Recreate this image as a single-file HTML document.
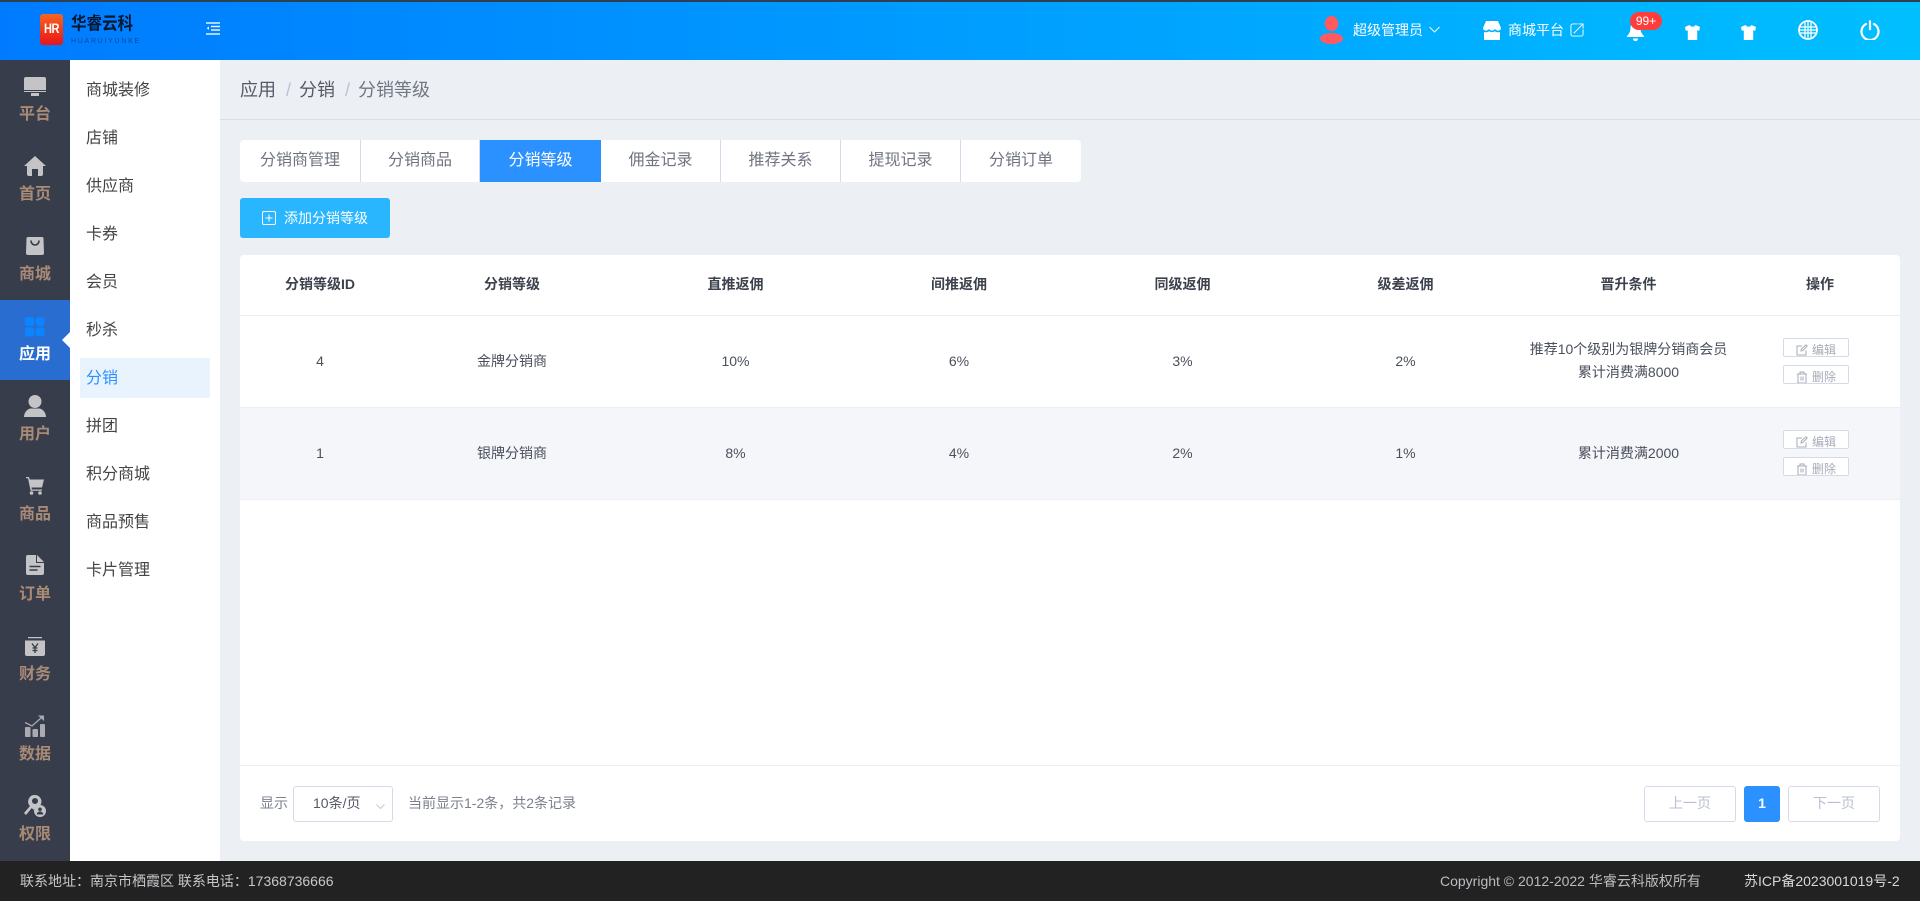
<!DOCTYPE html>
<html lang="zh-CN"><head><meta charset="utf-8"><title>分销等级</title>
<style>
*{box-sizing:border-box;margin:0;padding:0}
html,body{width:1920px;height:901px;overflow:hidden;background:#eceff4;font-family:"Liberation Sans","Noto Sans CJK SC",sans-serif;font-size:14px;color:#4a4f5c}
.a{position:absolute}
.t{position:absolute;white-space:nowrap;line-height:20px}
svg{position:absolute;display:block}
#top{left:0;top:0;width:1920px;height:60px;background:linear-gradient(90deg,#007bff,#00bfff)}
#stripe{left:0;top:0;width:1920px;height:2px;background:#2e3f4f}
#rail{left:0;top:60px;width:70px;height:801px;background:#373d4b}
.rl{position:absolute;left:0;width:70px;text-align:center;font-size:16px;font-weight:bold;line-height:22px;color:#a98a76}
#sub{left:70px;top:60px;width:150px;height:801px;background:#fff}
.si{position:absolute;left:86px;font-size:16px;line-height:42px;height:40px;color:#444;white-space:nowrap}
.tab{position:absolute;top:140px;height:42px;background:#fff;color:#6f7480;font-size:16px;line-height:42px;text-align:center;border-right:1px solid #d5dae8}
.th{position:absolute;top:274px;font-weight:bold;text-align:center;line-height:20px;color:#3c414d;font-size:14px}
.td{position:absolute;text-align:center;line-height:20px;color:#4a4f5c;font-size:14px}
.op{position:absolute;left:1783px;width:66px;height:19px;background:#fff;border:1px solid #d5dae8;border-radius:2px;overflow:hidden;font-size:12px;color:#a6abb8;line-height:22px;padding-left:28px}
.op svg{left:12px;top:5px}
.btn{position:absolute;top:786px;height:36px;border:1px solid #d5dae8;border-radius:3px;background:#fff;text-align:center;line-height:33px;color:#b8bfd0;font-size:14px}
</style></head><body>
<div class="a" id="top"></div><div class="a" id="stripe"></div>

<!-- logo -->
<div class="a" style="left:40px;top:14px;width:23px;height:31px;border-radius:3px;background:linear-gradient(180deg,#f7651d,#e8141c)"></div>
<div class="t" style="left:40px;top:19px;width:23px;text-align:center;color:#fff;font-weight:bold;font-size:11px;line-height:20px;letter-spacing:-.5px;transform:scaleY(1.25)">HR</div>
<div class="t" style="left:71px;top:15px;font-size:15.5px;font-weight:bold;color:#05162e;transform:scaleY(1.15);transform-origin:0 50%">华睿云科</div>
<div class="t" style="left:71px;top:38px;font-size:7px;line-height:8px;letter-spacing:1.72px;color:#0a4a99">HUARUIYUNKE</div>
<svg style="left:206px;top:22px" width="14" height="13" viewBox="0 0 14 13" fill="none" stroke="#e4f1ff" stroke-width="1.4"><path d="M0 1h14M5 4.5h9M5 8h9M0 12h14"/><path d="M3 4.5v3.4L.6 6.2z" fill="#e4f1ff" stroke="none"/></svg>

<!-- header right -->
<svg style="left:1320px;top:16px" width="23" height="28" viewBox="0 0 23 28" fill="#ff5a5f"><ellipse cx="11.5" cy="7.5" rx="6.8" ry="7.5"/><ellipse cx="11.5" cy="22.500" rx="11.500" ry="5.500"/></svg>
<div class="t" style="left:1353px;top:20px;color:#fff;font-size:14px">超级管理员</div>
<svg style="left:1429px;top:26px" width="11" height="8" viewBox="0 0 11 8" fill="none" stroke="#e8f6ff" stroke-width="1.1"><path d="M.5 1l5 5 5-5"/></svg>
<svg style="left:1483px;top:21px" width="18" height="19" viewBox="0 0 18 19" fill="#fff"><path d="M3 0h12l3 7c0 2-1.600 2.600-3 2.600-1 0-2-.5-3-1.600-.8 1-1.800 1.600-3 1.600S6.800 9 6 8c-1 1.100-2 1.600-3 1.600C1.600 9.600 0 9 0 7z"/><path d="M1 11c2 .6 3.600.2 5-.8 2 1.200 4 1.200 6 0 1.400 1 3 1.400 5 .8v8H1z"/></svg>
<div class="t" style="left:1508px;top:20px;color:#fff;font-size:14px">商城平台</div>
<svg style="left:1570px;top:23px" width="14" height="14" viewBox="0 0 15 15" fill="none" stroke="#fff" stroke-width="1"><path d="M8 1H3a2 2 0 0 0-2 2v9a2 2 0 0 0 2 2h9a2 2 0 0 0 2-2V7M9 1h5v5M14 1L4 11"/></svg>
<svg style="left:1627px;top:22px" width="17" height="19" viewBox="0 0 17 19" fill="#fff"><path d="M8.500 0C5 0 3.500 3 3.500 6c0 4-1.500 6-3.500 8v1h17v-1c-2-2-3.500-4-3.500-8 0-3-1.500-6-5-6z"/><path d="M6 16.500h5c0 1.500-1 2.500-2.500 2.500S6 18 6 16.500z"/></svg>
<div class="a" style="left:1630px;top:12px;width:32px;height:18px;border-radius:9px;background:#ff3d3d;color:#fff;font-size:12px;line-height:18px;text-align:center">99+</div>
<svg style="left:1685px;top:25px" width="15" height="15" viewBox="0 0 15 15" fill="#fff"><path d="M4.500 0c.8 1.200 1.800 1.700 3 1.700S9.700 1.200 10.500 0L15 2l-.8 3.800-2-.4V15H2.800V5.400l-2 .4L0 2z"/></svg>
<svg style="left:1741px;top:25px" width="15" height="15" viewBox="0 0 15 15" fill="#fff"><path d="M4.500 0c.8 1.200 1.800 1.700 3 1.700S9.700 1.200 10.500 0L15 2l-.8 3.800-2-.4V15H2.800V5.400l-2 .4L0 2z"/></svg>
<svg style="left:1798px;top:20px" width="20" height="20" viewBox="0 0 20 20" fill="none" stroke="#fff"><circle cx="10" cy="10" r="9" stroke-width="1.800"/><path d="M1 7h18M1 10h18M1 13h18M7 2v16M10 1v18M13 2v16" stroke-width="1.200"/></svg>
<svg style="left:1860px;top:20px" width="20" height="20" viewBox="0 0 20 20" fill="none" stroke="#fff" stroke-width="2.200" stroke-linecap="round"><path d="M6 4a8.500 8.500 0 1 0 8 0M10 1.200v8"/></svg>

<!-- rail -->
<div class="a" id="rail"></div>
<div class="a" style="left:0;top:300px;width:70px;height:80px;background:#2a6dd0"></div>
<div class="a" style="left:62px;top:332px;width:0;height:0;border:8px solid transparent;border-left-width:0;border-right-color:#fff"></div>

<svg style="left:24px;top:77px" width="22" height="19" viewBox="0 0 22 19" fill="#c4c4c6"><path d="M2 0h18a2 2 0 0 1 2 2v11H0V2a2 2 0 0 1 2-2z"/><path d="M0 14h22v1H0z"/><path d="M7 16h8v3H7z"/></svg>
<svg style="left:24px;top:156px" width="22" height="20" viewBox="0 0 22 20" fill="#c4c4c6"><path d="M11 0l11 10h-3v8a2 2 0 0 1-2 2h-3v-7H8v7H5a2 2 0 0 1-2-2v-8H0z"/></svg>
<svg style="left:26px;top:237px" width="18" height="18" viewBox="0 0 18 18"><path d="M2 0h14a1.500 1.500 0 0 1 1.500 1.500L18 16a2 2 0 0 1-2 2H2a2 2 0 0 1-2-2l.5-14.500A1.500 1.500 0 0 1 2 0z" fill="#c4c4c6"/><path d="M5 3.500c0 6 8 6 8 0" fill="none" stroke="#373d4b" stroke-width="1.600"/></svg>
<svg style="left:25px;top:317px" width="20" height="20" viewBox="0 0 20 20" fill="#0a84ff"><rect width="9" height="9" rx="2.500"/><circle cx="15" cy="4.500" r="4.800"/><rect y="10.500" width="9" height="9" rx="2.500"/><rect x="10.500" y="10.500" width="9" height="9" rx="2.500"/></svg>
<svg style="left:24px;top:395px" width="22" height="22" viewBox="0 0 22 22" fill="#c4c4c6"><circle cx="11" cy="6.500" r="6.500"/><path d="M0 22c0-5 4-8.500 7-8.500h8c3 0 7 3.500 7 8.500z"/></svg>
<svg style="left:26px;top:477px" width="18" height="18" viewBox="0 0 18 18" fill="#c4c4c6"><path d="M0 0h3l.7 2.500H18l-2 8H5.500l.4 2H16v1.300H4.600L2 1.300H0z"/><circle cx="5.500" cy="16" r="1.800"/><circle cx="14" cy="16" r="1.800"/></svg>
<svg style="left:26px;top:555px" width="18" height="20" viewBox="0 0 18 20"><path d="M2 0h9l7 7v11a2 2 0 0 1-2 2H2a2 2 0 0 1-2-2V2a2 2 0 0 1 2-2z" fill="#c4c4c6"/><path d="M10.500 0v7.500H18" fill="none" stroke="#373d4b"/><path d="M3.500 11.500h11M3.500 15h8" stroke="#373d4b" stroke-width="1.400"/></svg>
<svg style="left:25px;top:637px" width="20" height="19" viewBox="0 0 20 19" fill="#c4c4c6"><path d="M3 0h14v1.200H3zM0 3.500h20V17a2 2 0 0 1-2 2H2a2 2 0 0 1-2-2z"/><path d="M7 6.500l3 4 3-4M10 10.500V16M7.500 11h5M7.500 13.500h5" fill="none" stroke="#373d4b" stroke-width="1.300"/></svg>
<svg style="left:25px;top:715px" width="20" height="22" viewBox="0 0 20 22" fill="#a9abb0"><rect y="12" width="5.500" height="10" rx="1"/><rect x="7.500" y="14" width="5.500" height="8" rx="1"/><rect x="15" y="9" width="5" height="13" rx="1"/><path d="M0 7.500l7 3.500 9-8" fill="none" stroke="#a9abb0" stroke-width="1.300"/><path d="M13 .5h6v5.500z"/></svg>
<svg style="left:24px;top:795px" width="22" height="22" viewBox="0 0 22 22" fill="#c4c4c6"><path d="M11 0a6.500 6.500 0 0 1 4 11.600 7 7 0 0 0-5.500 3.300L7.800 13 2 20l-2-2L6 11A6.500 6.500 0 0 1 11 0zm0 3a3 3 0 1 0 0 6 3 3 0 0 0 0-6z"/><circle cx="16" cy="16" r="6"/><circle cx="16" cy="14.300" r="1.800" fill="#373d4b"/><path d="M12.800 19.500c0-2 1.500-3 3.200-3s3.200 1 3.200 3z" fill="#373d4b"/></svg>

<div class="rl" style="top:104px">平台</div>
<div class="rl" style="top:184px">首页</div>
<div class="rl" style="top:264px">商城</div>
<div class="rl" style="top:344px;color:#fff">应用</div>
<div class="rl" style="top:424px">用户</div>
<div class="rl" style="top:504px">商品</div>
<div class="rl" style="top:584px">订单</div>
<div class="rl" style="top:664px">财务</div>
<div class="rl" style="top:744px">数据</div>
<div class="rl" style="top:824px">权限</div>

<!-- sub menu -->
<div class="a" id="sub"></div>
<div class="a" style="left:80px;top:358px;width:130px;height:40px;background:#e8f3fe;border-radius:2px"></div>
<div class="si" style="top:70px">商城装修</div>
<div class="si" style="top:118px">店铺</div>
<div class="si" style="top:166px">供应商</div>
<div class="si" style="top:214px">卡券</div>
<div class="si" style="top:262px">会员</div>
<div class="si" style="top:310px">秒杀</div>
<div class="si" style="top:358px;color:#2b91ff">分销</div>
<div class="si" style="top:406px">拼团</div>
<div class="si" style="top:454px">积分商城</div>
<div class="si" style="top:502px">商品预售</div>
<div class="si" style="top:550px">卡片管理</div>

<!-- breadcrumb -->
<div class="a" style="left:220px;top:60px;width:1700px;height:60px;border-bottom:1px solid #d9dde8"></div>
<div class="t" style="left:240px;top:79px;font-size:18px;line-height:22px;color:#555a66">应用</div>
<div class="t" style="left:286px;top:79px;font-size:18px;line-height:22px;color:#b9c2d3">/</div>
<div class="t" style="left:299px;top:79px;font-size:18px;line-height:22px;color:#555a66">分销</div>
<div class="t" style="left:345px;top:79px;font-size:18px;line-height:22px;color:#b9c2d3">/</div>
<div class="t" style="left:358px;top:79px;font-size:18px;line-height:22px;color:#727784">分销等级</div>

<!-- tabs -->
<div class="tab" style="left:240px;width:121px;border-radius:4px 0 0 4px">分销商管理</div>
<div class="tab" style="left:361px;width:119px">分销商品</div>
<div class="tab" style="left:480px;width:121px;background:#2b91ff;color:#fff;border-right:0">分销等级</div>
<div class="tab" style="left:601px;width:120px">佣金记录</div>
<div class="tab" style="left:721px;width:120px">推荐关系</div>
<div class="tab" style="left:841px;width:120px">提现记录</div>
<div class="tab" style="left:961px;width:120px;border-right:0;border-radius:0 4px 4px 0">分销订单</div>

<!-- add button -->
<div class="a" style="left:240px;top:198px;width:150px;height:40px;background:#29b6ff;border-radius:3px"></div>
<svg style="left:262px;top:211px" width="14" height="14" viewBox="0 0 14 14" fill="none" stroke="#fff" stroke-width="1"><rect x=".5" y=".5" width="13" height="13" rx="1.500"/><path d="M3.500 7h7M7 3.500v7"/></svg>
<div class="t" style="left:284px;top:208px;color:#fff;font-size:14px">添加分销等级</div>

<!-- card -->
<div class="a" style="left:240px;top:255px;width:1660px;height:586px;background:#fff;border-radius:4px"></div>
<div class="a" style="left:240px;top:315px;width:1660px;height:1px;background:#edeff3"></div>
<div class="a" style="left:240px;top:407px;width:1660px;height:1px;background:#edeff3"></div>
<div class="a" style="left:240px;top:408px;width:1660px;height:91px;background:#f5f6fa"></div>
<div class="a" style="left:240px;top:499px;width:1660px;height:1px;background:#edeff3"></div>
<div class="a" style="left:240px;top:765px;width:1660px;height:1px;background:#edeff3"></div>

<div class="th" style="left:240px;width:160px">分销等级ID</div>
<div class="th" style="left:400px;width:224px">分销等级</div>
<div class="th" style="left:624px;width:223px">直推返佣</div>
<div class="th" style="left:847px;width:224px">间推返佣</div>
<div class="th" style="left:1071px;width:223px">同级返佣</div>
<div class="th" style="left:1294px;width:223px">级差返佣</div>
<div class="th" style="left:1517px;width:223px">晋升条件</div>
<div class="th" style="left:1740px;width:160px">操作</div>

<div class="td" style="left:240px;width:160px;top:351px">4</div>
<div class="td" style="left:400px;width:224px;top:351px">金牌分销商</div>
<div class="td" style="left:624px;width:223px;top:351px">10%</div>
<div class="td" style="left:847px;width:224px;top:351px">6%</div>
<div class="td" style="left:1071px;width:223px;top:351px">3%</div>
<div class="td" style="left:1294px;width:223px;top:351px">2%</div>
<div class="td" style="left:1517px;width:223px;top:338px;line-height:23px">推荐10个级别为银牌分销商会员<br>累计消费满8000</div>

<div class="td" style="left:240px;width:160px;top:443px">1</div>
<div class="td" style="left:400px;width:224px;top:443px">银牌分销商</div>
<div class="td" style="left:624px;width:223px;top:443px">8%</div>
<div class="td" style="left:847px;width:224px;top:443px">4%</div>
<div class="td" style="left:1071px;width:223px;top:443px">2%</div>
<div class="td" style="left:1294px;width:223px;top:443px">1%</div>
<div class="td" style="left:1517px;width:223px;top:443px">累计消费满2000</div>

<div class="op" style="top:338px"><svg width="12" height="12" viewBox="0 0 12 12" fill="none" stroke="#a6abb8"><path d="M10 6.500V11H1V2h5M5 7l.4-2L10 .8 11.200 2 6.800 6.600z"/></svg>编辑</div>
<div class="op" style="top:365px"><svg width="12" height="13" viewBox="0 0 12 13" fill="none" stroke="#a6abb8"><path d="M1 3h10M4 3V1h4v2M2 3v9h8V3M5 5.500v4M7 5.500v4"/></svg>删除</div>
<div class="op" style="top:430px"><svg width="12" height="12" viewBox="0 0 12 12" fill="none" stroke="#a6abb8"><path d="M10 6.500V11H1V2h5M5 7l.4-2L10 .8 11.200 2 6.800 6.600z"/></svg>编辑</div>
<div class="op" style="top:457px"><svg width="12" height="13" viewBox="0 0 12 13" fill="none" stroke="#a6abb8"><path d="M1 3h10M4 3V1h4v2M2 3v9h8V3M5 5.500v4M7 5.500v4"/></svg>删除</div>

<!-- pagination -->
<div class="t" style="left:260px;top:793px;color:#7b808c">显示</div>
<div class="a" style="left:293px;top:786px;width:100px;height:36px;border:1px solid #d5dae8;border-radius:3px;background:#fff"></div>
<div class="t" style="left:313px;top:793px;color:#555a66">10条/页</div>
<svg style="left:376px;top:804px" width="9" height="6" viewBox="0 0 9 6" fill="none" stroke="#c6cbd8"><path d="M.5.500l4 4 4-4"/></svg>
<div class="t" style="left:408px;top:793px;color:#7b808c">当前显示1-2条，共2条记录</div>
<div class="btn" style="left:1644px;width:92px">上一页</div>
<div class="btn" style="left:1744px;width:36px;background:#2b91ff;border-color:#2b91ff;color:#fff;font-weight:bold">1</div>
<div class="btn" style="left:1788px;width:92px">下一页</div>

<!-- footer -->
<div class="a" style="left:0;top:861px;width:1920px;height:40px;background:#222"></div>
<div class="t" style="left:20px;top:871px;color:#c4c8cc">联系地址：南京市栖霞区 联系电话：17368736666</div>
<div class="t" style="left:1440px;top:871px;color:#b9bdc1">Copyright © 2012-2022 华睿云科版权所有</div>
<div class="t" style="left:1744px;top:871px;color:#d4d8dc">苏ICP备2023001019号-2</div>
</body></html>
